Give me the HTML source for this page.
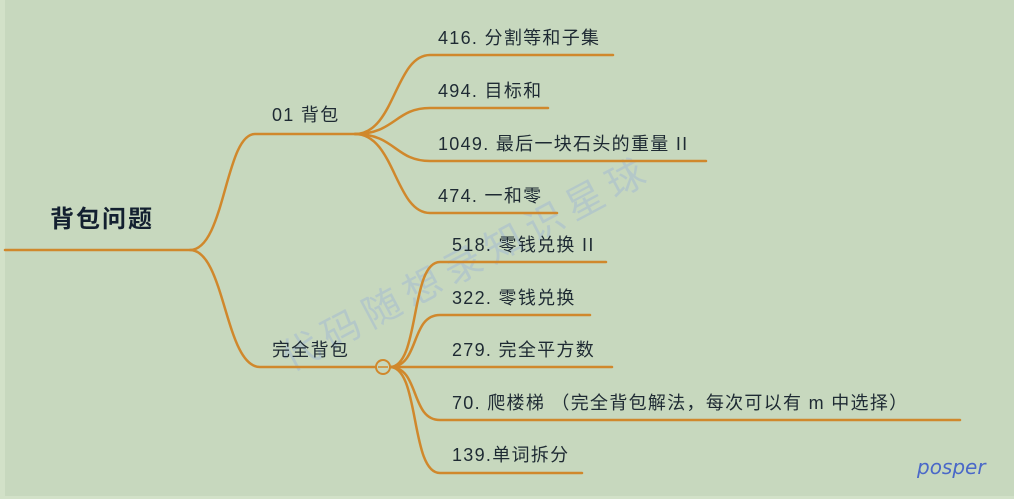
<!DOCTYPE html>
<html><head><meta charset="utf-8"><style>
html,body{margin:0;padding:0;background:#c7d8be;}
svg{display:block}
text{font-family:"Liberation Sans","Noto Sans CJK SC",sans-serif;fill:#1e2a33;font-size:18px;letter-spacing:1.3px}
</style></head><body>
<svg width="1014" height="499" viewBox="0 0 1014 499" xmlns="http://www.w3.org/2000/svg">
<rect width="1014" height="499" fill="#c7d8be"/>
<rect x="0" y="0" width="5" height="499" fill="#d2e1c8"/>
<rect x="0" y="496" width="1014" height="3" fill="#d2e1c8"/>
<text x="290" y="372" transform="rotate(-28 290 372)" style="font-size:38px;fill:#a9bfd0;opacity:0.6;letter-spacing:8px">代码随想录知识星球</text>
<g fill="none" stroke="#d0882c" stroke-width="2.5" stroke-linecap="round">
<path d="M5 250 H190 C225 250 225 134 255 134 H355"/>
<path d="M190 250 C225 250 225 367 260 367 H376"/>
<path d="M355 134 C395 134 395 55 430 55 H613"/>
<path d="M355 134 C395 134 395 108 430 108 H548"/>
<path d="M355 134 C395 134 395 161 430 161 H706"/>
<path d="M355 134 C395 134 395 213 430 213 H557"/>
<path d="M390 367 C420 367 410 262 440 262 H606"/>
<path d="M390 367 C420 367 410 315 440 315 H590"/>
<path d="M390 367 H612"/>
<path d="M390 367 C420 367 410 420 440 420 H960"/>
<path d="M390 367 C420 367 410 473 440 473 H582"/>
</g>
<circle cx="383" cy="367" r="7" fill="#c7d8be" stroke="#d0882c" stroke-width="2"/>
<line x1="378" y1="367" x2="388" y2="367" stroke="#d0882c" stroke-width="1.5"/>
<text x="50" y="227" style="font-size:24px;font-weight:bold;fill:#132030;letter-spacing:2px">背包问题</text>
<text x="272" y="121">01 背包</text>
<text x="272" y="356">完全背包</text>
<text x="438" y="44">416. 分割等和子集</text>
<text x="438" y="97">494. 目标和</text>
<text x="438" y="150">1049. 最后一块石头的重量 II</text>
<text x="438" y="202">474. 一和零</text>
<text x="452" y="251">518. 零钱兑换 II</text>
<text x="452" y="304">322. 零钱兑换</text>
<text x="452" y="356">279. 完全平方数</text>
<text x="452" y="409">70. 爬楼梯 （完全背包解法，每次可以有 m 中选择）</text>
<text x="452" y="461">139.单词拆分</text>
<text x="917" y="474" style="font-size:20px;fill:#4a68c8;font-style:italic;font-family:'DejaVu Sans',sans-serif;letter-spacing:0">posper</text>
</svg>
</body></html>
